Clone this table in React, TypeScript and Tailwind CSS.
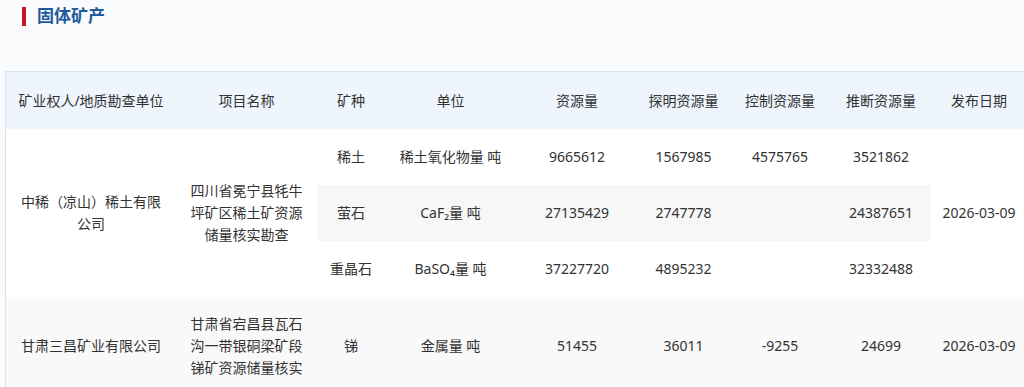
import React from "react";

const font = { fontFamily: '"Noto Sans", "Noto Sans CJK SC", sans-serif' };

export default function App() {
  const cell = "text-center align-middle text-[14px] leading-[22px] text-[#333]";
  const one = `${cell} whitespace-nowrap px-0`;
  return (
    <div className="w-[1024px] h-[387px] overflow-hidden bg-[#fafbfd]" style={font}>
      <div className="flex items-center h-[33px] pl-[22px] pb-[1px]">
        <div className="w-[4px] h-[19px] bg-[#c8161d]" />
        <div className="ml-[11px] text-[17px] font-bold text-[#1e5a9c] leading-[20px]">固体矿产</div>
      </div>
      <div className="mt-[38px] ml-[5px] w-[1040px] border-t border-l border-[#d9e6f4]">
        <table className="table-fixed border-collapse w-[1021px]">
          <colgroup>
            <col className="w-[170px]" />
            <col className="w-[141px]" />
            <col className="w-[68px]" />
            <col className="w-[131px]" />
            <col className="w-[122px]" />
            <col className="w-[91px]" />
            <col className="w-[102px]" />
            <col className="w-[100px]" />
            <col className="w-[96px]" />
          </colgroup>
          <thead>
            <tr className="h-[57px] bg-[#eef5fc]">
              <th className={`${one} font-normal`}>矿业权人/地质勘查单位</th>
              <th className={`${one} font-normal`}>项目名称</th>
              <th className={`${one} font-normal`}>矿种</th>
              <th className={`${one} font-normal`}>单位</th>
              <th className={`${one} font-normal`}>资源量</th>
              <th className={`${one} font-normal`}>探明资源量</th>
              <th className={`${one} font-normal`}>控制资源量</th>
              <th className={`${one} font-normal`}>推断资源量</th>
              <th className={`${one} font-normal`}>发布日期</th>
            </tr>
          </thead>
          <tbody>
            <tr className="h-[56px]">
              <td rowSpan={3} className={`${cell} bg-white px-[12px]`}>中稀（凉山）稀土有限公司</td>
              <td rowSpan={3} className={`${cell} bg-white px-[14px]`}>四川省冕宁县牦牛坪矿区稀土矿资源储量核实勘查</td>
              <td className={`${one} bg-white`}>稀土</td>
              <td className={`${one} bg-white`}>稀土氧化物量 吨</td>
              <td className={`${one} bg-white`}>9665612</td>
              <td className={`${one} bg-white`}>1567985</td>
              <td className={`${one} bg-white`}>4575765</td>
              <td className={`${one} bg-white`}>3521862</td>
              <td rowSpan={3} className={`${one} bg-white`}>2026-03-09</td>
            </tr>
            <tr className="h-[56px]">
              <td className={`${one} bg-[#f7f7f7]`}>萤石</td>
              <td className={`${one} bg-[#f7f7f7]`}>CaF₂量 吨</td>
              <td className={`${one} bg-[#f7f7f7]`}>27135429</td>
              <td className={`${one} bg-[#f7f7f7]`}>2747778</td>
              <td className={`${one} bg-[#f7f7f7]`}></td>
              <td className={`${one} bg-[#f7f7f7]`}>24387651</td>
            </tr>
            <tr className="h-[56px]">
              <td className={`${one} bg-white`}>重晶石</td>
              <td className={`${one} bg-white`}>BaSO₄量 吨</td>
              <td className={`${one} bg-white`}>37227720</td>
              <td className={`${one} bg-white`}>4895232</td>
              <td className={`${one} bg-white`}></td>
              <td className={`${one} bg-white`}>32332488</td>
            </tr>
            <tr className="h-[98px] bg-[#f9f9f9]">
              <td className={one}>甘肃三昌矿业有限公司</td>
              <td className={`${cell} px-[14px]`}>甘肃省宕昌县瓦石沟一带银硐梁矿段锑矿资源储量核实</td>
              <td className={one}>锑</td>
              <td className={one}>金属量 吨</td>
              <td className={one}>51455</td>
              <td className={one}>36011</td>
              <td className={one}>-9255</td>
              <td className={one}>24699</td>
              <td className={one}>2026-03-09</td>
            </tr>
          </tbody>
        </table>
      </div>
    </div>
  );
}
